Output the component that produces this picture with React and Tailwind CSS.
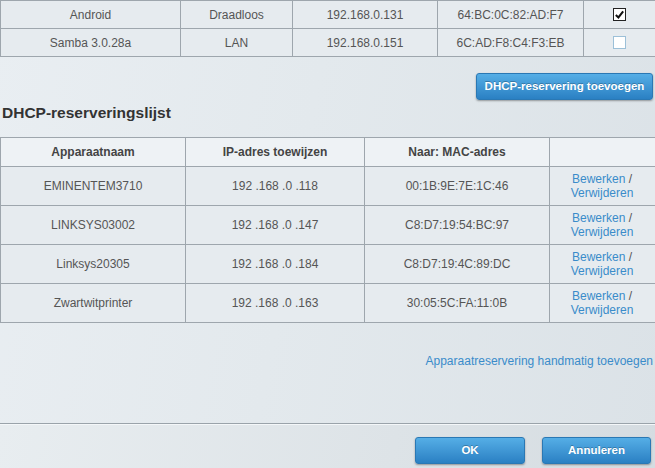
import React from 'react';

const devices = [
  { name: 'Android', type: 'Draadloos', ip: '192.168.0.131', mac: '64:BC:0C:82:AD:F7', checked: true },
  { name: 'Samba 3.0.28a', type: 'LAN', ip: '192.168.0.151', mac: '6C:AD:F8:C4:F3:EB', checked: false },
];

const reservations = [
  { name: 'EMINENTEM3710', ip: '192 .168 .0 .118', mac: '00:1B:9E:7E:1C:46' },
  { name: 'LINKSYS03002', ip: '192 .168 .0 .147', mac: 'C8:D7:19:54:BC:97' },
  { name: 'Linksys20305', ip: '192 .168 .0 .184', mac: 'C8:D7:19:4C:89:DC' },
  { name: 'Zwartwitprinter', ip: '192 .168 .0 .163', mac: '30:05:5C:FA:11:0B' },
];

const cell = 'flex items-center justify-center border-l border-[#9ea6ad]';

const BlueButton = ({ children, className = '' }) => (
  <button
    className={`h-[27px] rounded-[3px] border border-[#2a78b4] bg-gradient-to-b from-[#55aee6] to-[#2a80c3] text-[11.5px] font-bold text-white shadow-[0_1px_2px_rgba(0,0,0,0.35)] [text-shadow:0_-1px_0_rgba(0,0,0,0.25)] ${className}`}
  >
    {children}
  </button>
);

const Checkbox = ({ checked }) =>
  checked ? (
    <span className="flex h-[13px] w-[13px] items-center justify-center border border-[#222] bg-white">
      <svg viewBox="0 0 12 12" className="h-[11px] w-[11px]">
        <path d="M2 6.5 L4.8 9.2 L10 2.5" fill="none" stroke="#111" strokeWidth="2.2" />
      </svg>
    </span>
  ) : (
    <span className="block h-[13px] w-[13px] border border-[#9cc0d8] bg-white" />
  );

export default function App() {
  return (
    <div className="relative h-[468px] w-[655px] overflow-hidden bg-[linear-gradient(100deg,#e9eef2_0%,#e3e9ed_45%,#dbe2e7_100%)] font-['Liberation_Sans',Arial,sans-serif] text-[12px] text-[#555]">
      <div className="flex h-[423px] flex-col">
        {/* connected devices */}
        <div className="w-[660px] border-t border-r border-[#9ea6ad]">
          {devices.map((d) => (
            <div
              key={d.name}
              className="grid h-[28px] grid-cols-[180px_112px_145px_146px_1fr] border-b border-[#9ea6ad] bg-[#e6ebef]"
            >
              <div className={cell}>{d.name}</div>
              <div className={cell}>{d.type}</div>
              <div className={cell}>{d.ip}</div>
              <div className={cell}>{d.mac}</div>
              <div className={`${cell} pr-[5px]`}>
                <Checkbox checked={d.checked} />
              </div>
            </div>
          ))}
        </div>

        <div className="mt-[16px] flex justify-end pr-[2px]">
          <BlueButton className="w-[177px]">DHCP-reservering toevoegen</BlueButton>
        </div>

        <h2 className="mt-[4px] pl-[2px] text-[15.5px] font-bold leading-[18px] text-[#333]">
          DHCP-reserveringslijst
        </h2>

        {/* reservation list */}
        <div className="mt-[15px] w-[660px] border-t border-r border-[#9ea6ad]">
          <div className="grid h-[29px] grid-cols-[185px_179px_185px_1fr] border-b border-[#9ea6ad] bg-[#eef2f5] font-bold text-[#444]">
            <div className={cell}>Apparaatnaam</div>
            <div className={cell}>IP-adres toewijzen</div>
            <div className={cell}>Naar: MAC-adres</div>
            <div className={cell}></div>
          </div>
          {reservations.map((r) => (
            <div
              key={r.name}
              className="grid h-[39px] grid-cols-[185px_179px_185px_1fr] border-b border-[#9ea6ad] bg-[#e6ebef]"
            >
              <div className={cell}>{r.name}</div>
              <div className={cell}>{r.ip}</div>
              <div className={cell}>{r.mac}</div>
              <div className={`${cell} flex-col pr-[5px] leading-[14px] text-[#3a8cca]`}>
                <span>
                  Bewerken <span className="text-[#555]">/</span>
                </span>
                <span>Verwijderen</span>
              </div>
            </div>
          ))}
        </div>

        <div className="mt-[29px] flex justify-end pr-[2px]">
          <a className="text-[12px] text-[#3a8cca]">Apparaatreservering handmatig toevoegen</a>
        </div>
      </div>

      {/* footer */}
      <div className="flex h-[45px] items-start justify-end gap-[17px] border-t border-[#9aa3aa] bg-[linear-gradient(100deg,#e8edf0_0%,#dde3e7_60%,#d5dce1_100%)] pt-[13px] pr-[4px] shadow-[inset_0_1px_0_#f4f7f9]">
        <BlueButton className="w-[110px]">OK</BlueButton>
        <BlueButton className="w-[109px]">Annuleren</BlueButton>
      </div>
    </div>
  );
}
